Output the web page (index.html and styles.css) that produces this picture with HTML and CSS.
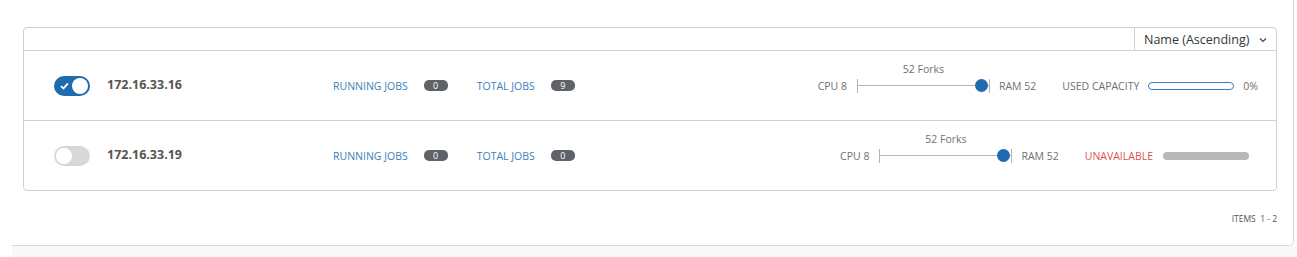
FILE: index.html
```html
<!DOCTYPE html>
<html>
<head>
<meta charset="utf-8">
<link rel="stylesheet" href="styles.css">
</head>
<body>
<div class="panel">
  <div class="list">
    <div class="toolbar">
      <div class="sort">
        <span>Name (Ascending)</span>
        <svg class="chev" width="8" height="6" viewBox="0 0 8 6"><path d="M1 1.5 L4 4.5 L7 1.5" fill="none" stroke="#444" stroke-width="1.2"/></svg>
      </div>
    </div>
    <div class="row">
      <div class="toggle on">
        <svg class="check" width="9" height="8" viewBox="0 0 9 8"><path d="M1 4.2 L3.4 6.4 L8 1.4" fill="none" stroke="#fff" stroke-width="1.8"/></svg>
        <span class="knob"></span>
      </div>
      <div class="ip">172.16.33.16</div>
      <div class="jobs">
        <span class="link">RUNNING JOBS</span><span class="badge">0</span>
        <span class="link total">TOTAL JOBS</span><span class="badge">9</span>
      </div>
      <div class="capacity">
        <span class="muted">CPU 8</span>
        <div class="slider">
          <span class="forks">52 Forks</span>
          <span class="knob-s"></span>
        </div>
        <span class="muted">RAM 52</span>
        <span class="muted cap-label">USED CAPACITY</span>
        <div class="bar outline"></div>
        <span class="muted pct">0%</span>
      </div>
    </div>
    <div class="row">
      <div class="toggle off">
        <span class="knob"></span>
      </div>
      <div class="ip">172.16.33.19</div>
      <div class="jobs">
        <span class="link">RUNNING JOBS</span><span class="badge">0</span>
        <span class="link total">TOTAL JOBS</span><span class="badge">0</span>
      </div>
      <div class="capacity">
        <span class="muted">CPU 8</span>
        <div class="slider">
          <span class="forks">52 Forks</span>
          <span class="knob-s"></span>
        </div>
        <span class="muted">RAM 52</span>
        <span class="danger cap-label">UNAVAILABLE</span>
        <div class="bar filled"></div>
        <span class="muted pct"></span>
      </div>
    </div>
  </div>
  <div class="footer">ITEMS&nbsp; 1 - 2</div>
</div>
<div class="below"></div>
</body>
</html>
```

FILE: styles.css
```css
html, body {
  margin: 0;
  padding: 0;
  background: #fff;
  font-family: "Open Sans", "Liberation Sans", sans-serif;
  color: #707070;
}
.panel {
  margin-left: 12px;
  width: 1282px;
  height: 246px;
  box-sizing: border-box;
  border-right: 1px solid #d7d7d7;
  border-bottom: 1px solid #d7d7d7;
  border-bottom-right-radius: 5px;
  padding: 27px 16px 0 11px;
  display: flex;
  flex-direction: column;
}
.below {
  margin-left: 12px;
  height: 11px;
  background: #f8f8f8;
}
.list {
  border: 1px solid #cfcfcf;
  border-radius: 4px;
  background: #fff;
}
.toolbar {
  height: 22px;
  border-bottom: 1px solid #d2d2d2;
  display: flex;
  justify-content: flex-end;
}
.sort {
  width: 142px;
  box-sizing: border-box;
  border-left: 1px solid #d2d2d2;
  display: flex;
  align-items: center;
  padding: 0 9px 0 9px;
  justify-content: space-between;
  font-size: 12.5px;
  color: #363636;
}
.chev { margin-top: 1px; }
.row {
  height: 69px;
  display: flex;
  align-items: center;
  padding: 0 18px 0 30px;
}
.row + .row { border-top: 1px solid #d2d2d2; }
.toggle {
  width: 36px;
  height: 20px;
  border-radius: 10px;
  box-sizing: border-box;
  padding: 2px;
  display: flex;
  align-items: center;
  justify-content: space-between;
}
.toggle.on { background: #1f6bb0; }
.toggle.off { background: #d8d8d8; }
.check { margin-left: 4px; }
.knob {
  width: 16px;
  height: 16px;
  border-radius: 50%;
  background: #fff;
}
.ip {
  margin-left: 17px;
  width: 226px;
  font-size: 12.5px;
  font-weight: 700;
  color: #555;
  margin-top: -2px;
}
.jobs {
  display: flex;
  align-items: center;
  font-size: 10.5px;
}
.link { color: #3a7fbb; }
.link.total { margin-left: 29px; }
.badge {
  margin-left: 16px;
  width: 24px;
  height: 11px;
  border-radius: 5px;
  background: #5f6368;
  color: #fff;
  font-size: 9px;
  line-height: 11px;
  text-align: center;
}
.capacity {
  margin-left: auto;
  display: flex;
  align-items: center;
  font-size: 10.5px;
}
.muted { color: #707070; }
.danger { color: #d9534f; }
.slider {
  position: relative;
  margin: 0 9px 0 10px;
  width: 133px;
  height: 14px;
  box-sizing: border-box;
  border-left: 1px solid #b5b5b5;
  border-right: 1px solid #b5b5b5;
  background: linear-gradient(#b5b5b5, #b5b5b5) center / 100% 1px no-repeat;
}
.forks {
  position: absolute;
  left: 0;
  right: 0;
  top: -17px;
  text-align: center;
  font-size: 10.5px;
  color: #707070;
  white-space: nowrap;
}
.knob-s {
  position: absolute;
  right: 1px;
  top: 0;
  width: 13px;
  height: 13px;
  border-radius: 50%;
  background: #1f6bb0;
}
.cap-label { margin-left: 26px; }
.bar {
  margin-left: 9px;
  width: 86px;
  height: 8px;
  box-sizing: border-box;
  border-radius: 4px;
}
.bar.outline { border: 1px solid #3a7fbb; }
.bar.filled { background: #b8b8b8; margin-left: 10px; }
.pct { margin-left: 9px; }
.footer {
  margin-top: 22px;
  text-align: right;
  font-size: 8.5px;
  color: #555;
}
```
